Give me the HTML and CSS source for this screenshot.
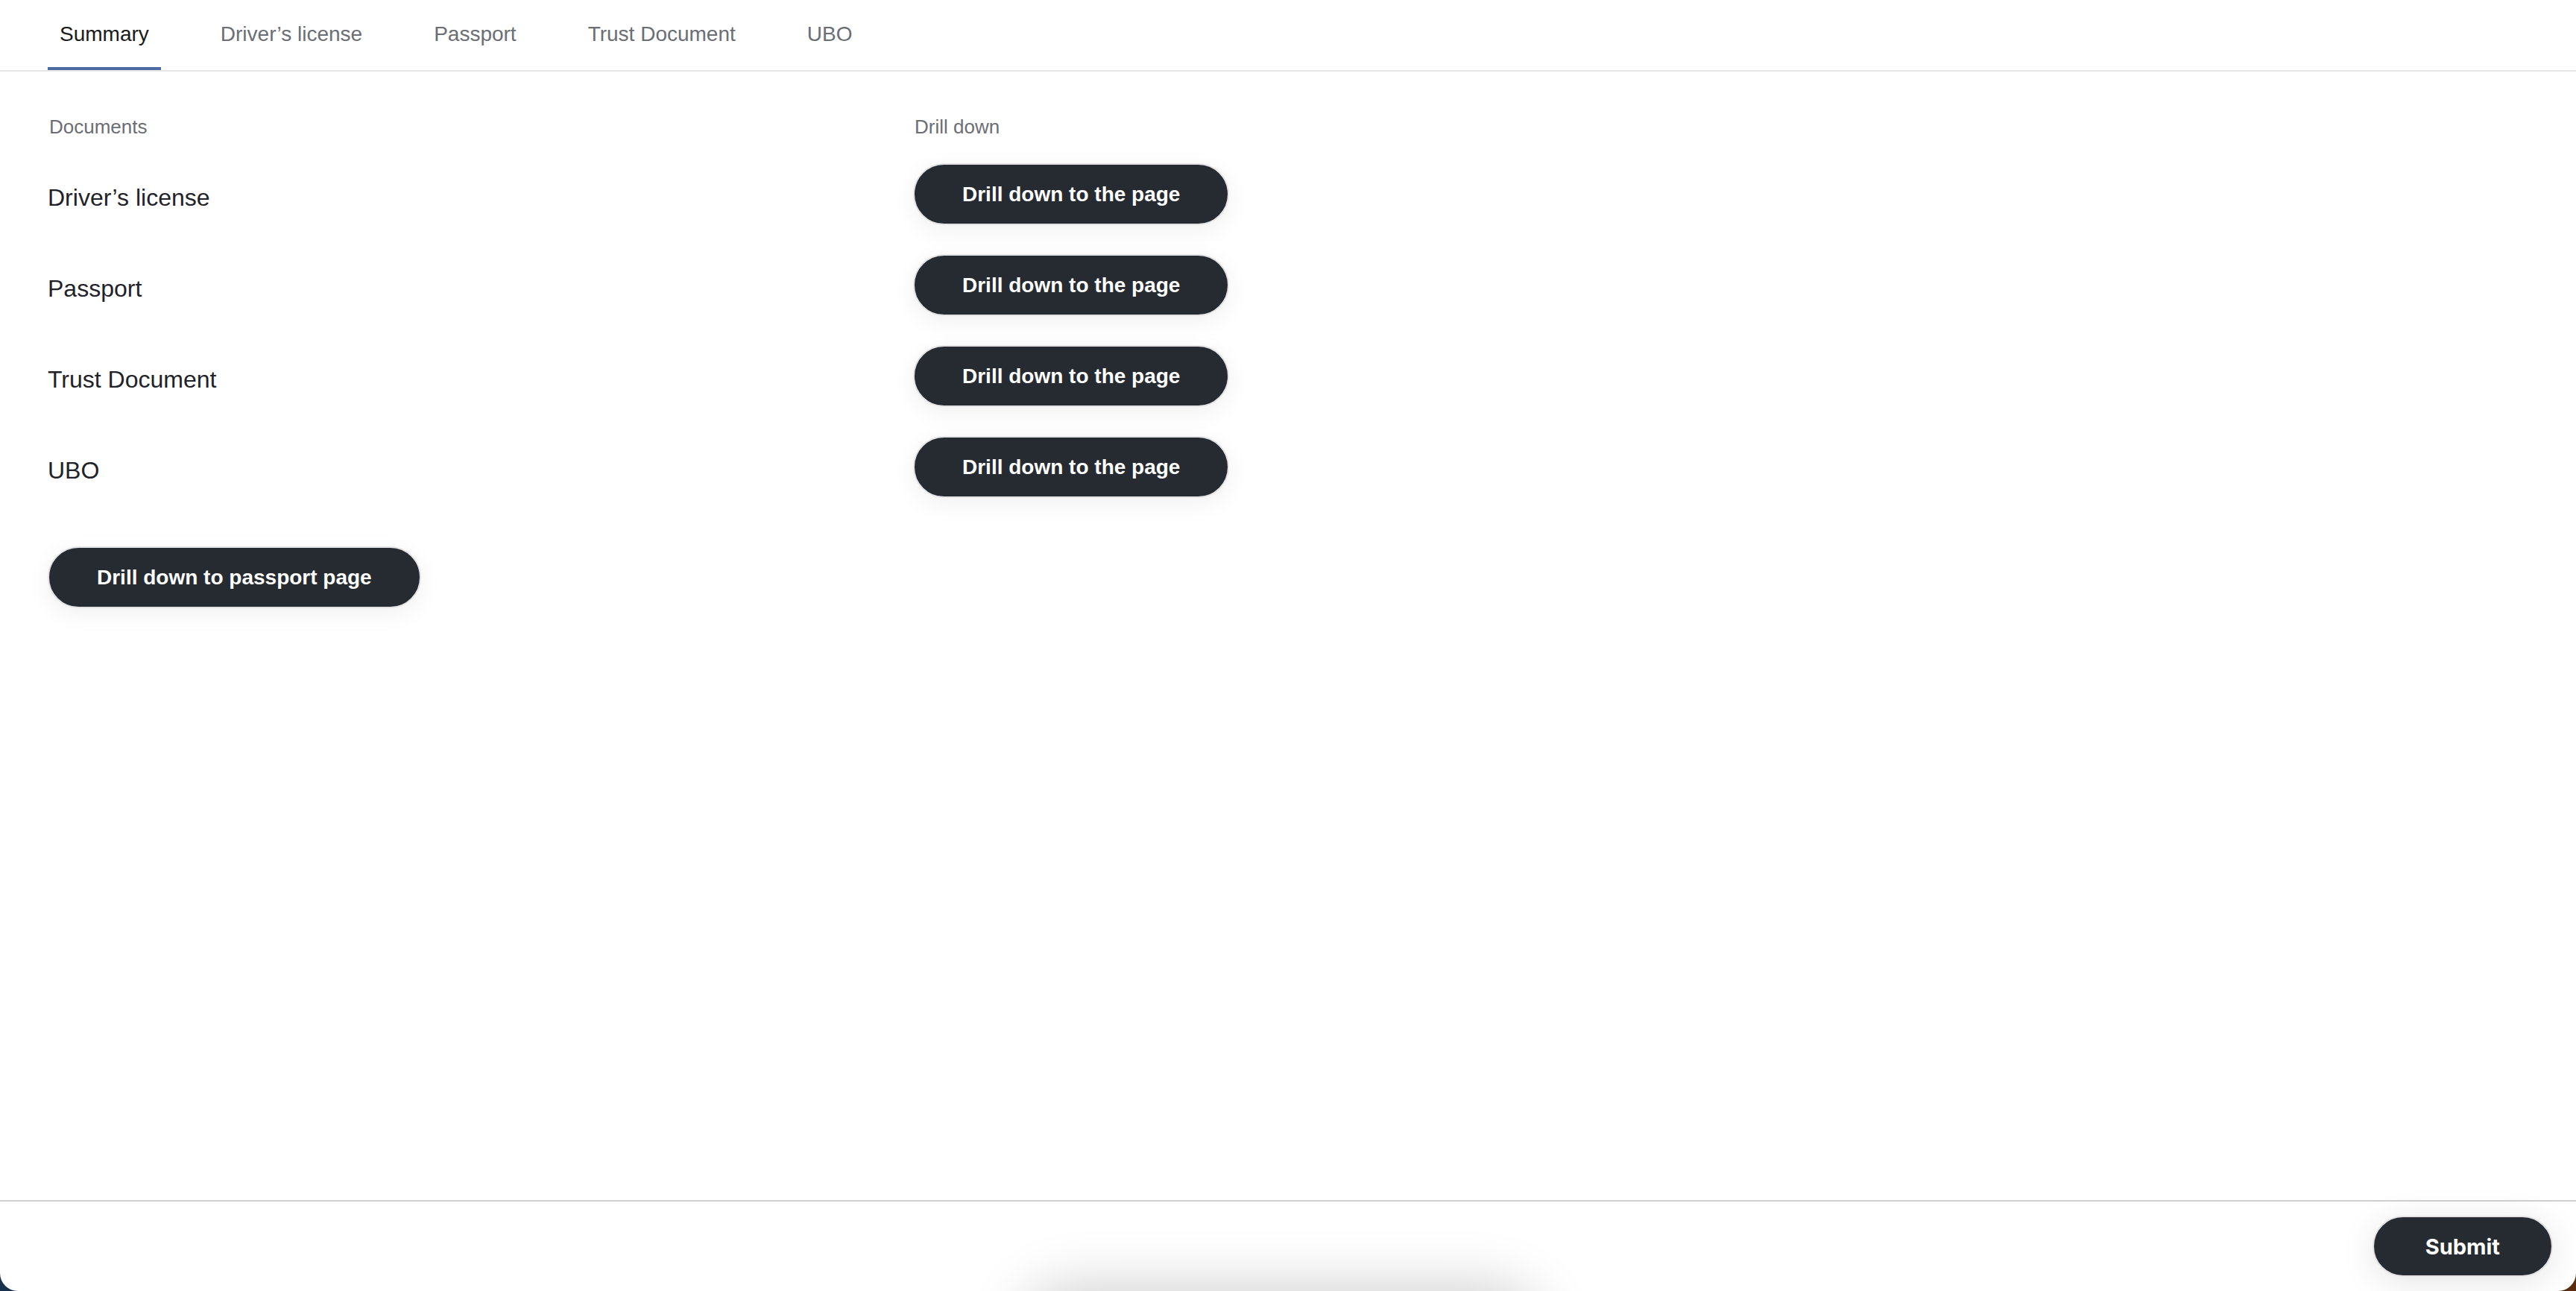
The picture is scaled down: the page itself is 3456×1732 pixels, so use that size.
FILE: index.html
```html
<!DOCTYPE html>
<html lang="en">
<head>
    <meta charset="UTF-8">
    <meta name="viewport" content="width=device-width, initial-scale=1.0">
    <title>Document Summary</title>
    <link rel="stylesheet" href="styles.css">
</head>
<body>
    <div class="app">
        <nav class="tabs">
            <a href="#" class="tab active">Summary</a>
            <a href="#" class="tab">Driver’s license</a>
            <a href="#" class="tab">Passport</a>
            <a href="#" class="tab">Trust Document</a>
            <a href="#" class="tab">UBO</a>
        </nav>

        <main class="summary">
            <div class="doc-table">
                <div class="doc-head">
                    <span>Documents</span>
                    <span>Drill down</span>
                </div>
                <div class="doc-rows">
                    <div class="doc-row">
                        <span class="doc-name">Driver’s license</span>
                        <button type="button" class="btn">Drill down to the page</button>
                    </div>
                    <div class="doc-row">
                        <span class="doc-name">Passport</span>
                        <button type="button" class="btn">Drill down to the page</button>
                    </div>
                    <div class="doc-row">
                        <span class="doc-name">Trust Document</span>
                        <button type="button" class="btn">Drill down to the page</button>
                    </div>
                    <div class="doc-row">
                        <span class="doc-name">UBO</span>
                        <button type="button" class="btn">Drill down to the page</button>
                    </div>
                </div>
            </div>

            <button type="button" class="btn btn-passport">Drill down to passport page</button>
        </main>

        <footer class="footer">
            <button type="submit" class="btn btn-submit">Submit</button>
        </footer>

        <!-- snackbar parked just under the window edge -->
        <div class="snackbar"></div>
    </div>
</body>
</html>
```

FILE: styles.css
```css
:root {
    --ink: #1f2329;
    --muted: #6b6e74;
    --accent: #4d6ca6;
    --btn-bg: #262a31;
    --line: #e6e6e6;
    --white: #fff;
}

* {
    box-sizing: border-box;
}

html, body {
    height: 100%;
}

body {
    margin: 0;
    font-family: 'Liberation Sans', Arial, sans-serif;
    color: var(--ink);
    background: linear-gradient(90deg, #17314d 50%, #5b2d10 50%);
}

.app {
    position: relative;
    height: 100vh;
    display: flex;
    flex-direction: column;
    background-color: var(--white);
    border-radius: 0 0 24px 24px;
    overflow: hidden;
}

/* Tabs */
.tabs {
    display: flex;
    gap: 64px;
    padding: 0 64px;
    border-bottom: 2px solid var(--line);
}

.tab {
    padding: 30px 16px 28px;
    font-size: 28px;
    line-height: 32px;
    color: var(--muted);
    text-decoration: none;
    border-bottom: 4px solid transparent;
}

.tab.active {
    color: #1a1a1a;
    border-bottom-color: var(--accent);
}

/* Summary table */
.summary {
    flex: 1;
    padding: 59px 64px 0;
}

.doc-head,
.doc-row {
    display: grid;
    grid-template-columns: 1161px max-content;
    align-items: center;
}

.doc-head {
    margin-bottom: 34px;
    font-size: 26px;
    line-height: 30px;
    color: var(--muted);
}

.doc-head span {
    padding-left: 2px;
}

.doc-rows {
    display: flex;
    flex-direction: column;
    gap: 39px;
}

.doc-name {
    font-size: 32px;
    line-height: 36px;
    padding-top: 9px;
}

/* Buttons */
.btn {
    display: inline-flex;
    align-items: center;
    justify-content: center;
    height: 83px;
    padding: 0 64px;
    font-family: 'Liberation Sans', Arial, sans-serif;
    font-size: 28px;
    font-weight: 700;
    color: var(--white);
    background-color: var(--btn-bg);
    border: 2px solid #e4e4e6;
    border-radius: 42px;
    box-shadow: 0 8px 32px rgba(0, 0, 0, 0.06);
    cursor: pointer;
}

.btn-passport {
    margin-top: 65px;
}

/* Footer */
.footer {
    display: flex;
    justify-content: flex-end;
    align-items: center;
    height: 122px;
    padding: 0 31px;
    border-top: 2px solid #d0d0d0;
}

.btn-submit {
    height: 82px;
    padding: 0 69px;
    font-family: Inter, 'Liberation Sans', sans-serif;
    font-size: 29px;
    box-shadow: 0 8px 48px rgba(0, 0, 0, 0.1);
}

.snackbar {
    position: absolute;
    left: calc(50% - 330px);
    top: calc(100% + 24px);
    width: 640px;
    height: 80px;
    border-radius: 40px;
    background-color: var(--white);
    box-shadow: 0 0 80px 28px rgba(0, 0, 0, 0.2);
}
```
